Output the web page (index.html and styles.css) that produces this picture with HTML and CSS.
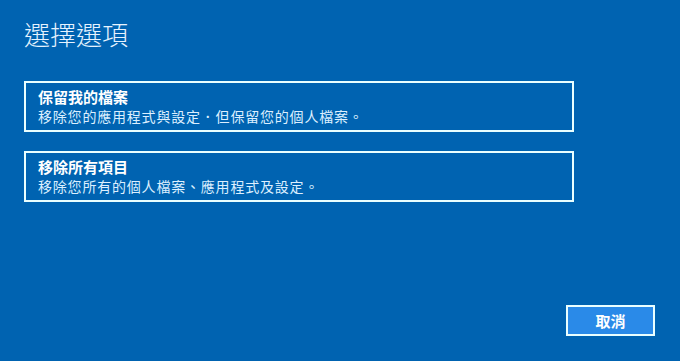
FILE: index.html
```html
<!DOCTYPE html>
<html lang="zh-Hant">
<head>
<meta charset="utf-8">
<link rel="stylesheet" href="styles.css">
</head>
<body>
<div class="screen">
  <h1 class="title">選擇選項</h1>
  <div class="options">
    <div class="option">
      <div class="opt-title">保留我的檔案</div>
      <div class="opt-desc">移除您的應用程式與設定．但保留您的個人檔案。</div>
    </div>
    <div class="option">
      <div class="opt-title">移除所有項目</div>
      <div class="opt-desc">移除您所有的個人檔案、應用程式及設定。</div>
    </div>
  </div>
  <div class="footer">
    <button class="btn">取消</button>
  </div>
</div>
</body>
</html>
```
FILE: styles.css
```css
html, body {
  margin: 0;
  padding: 0;
  background: #0063b1;
}
.screen {
  box-sizing: border-box;
  width: 680px;
  height: 361px;
  padding: 17px 25px 25px 24px;
  display: flex;
  flex-direction: column;
  font-family: "Noto Sans CJK TC", "Noto Sans", sans-serif;
  color: #e8f6ff;
}
.title {
  margin: 0;
  font-size: 26px;
  font-weight: 300;
  line-height: 34px;
  color: #e6f3ff;
}
.options {
  margin-top: 30px;
  display: flex;
  flex-direction: column;
  gap: 19px;
  width: 550px;
}
.option {
  box-sizing: border-box;
  height: 51px;
  border: 2px solid #eaffff;
  padding: 4px 12px 0;
}
.opt-title {
  font-size: 15px;
  font-weight: 700;
  line-height: 20px;
  color: #ffffff;
}
.opt-desc {
  font-size: 14px;
  line-height: 19px;
  letter-spacing: 0.8px;
  color: #dcefff;
}
.footer {
  margin-top: auto;
  display: flex;
  justify-content: flex-end;
}
.btn {
  box-sizing: border-box;
  width: 89px;
  height: 31px;
  background: #2a8ae8;
  border: 2px solid #eaffff;
  color: #ffffff;
  font-family: "Noto Sans CJK TC", "Noto Sans", sans-serif;
  font-size: 15px;
  font-weight: 700;
  padding: 0;
}
```
